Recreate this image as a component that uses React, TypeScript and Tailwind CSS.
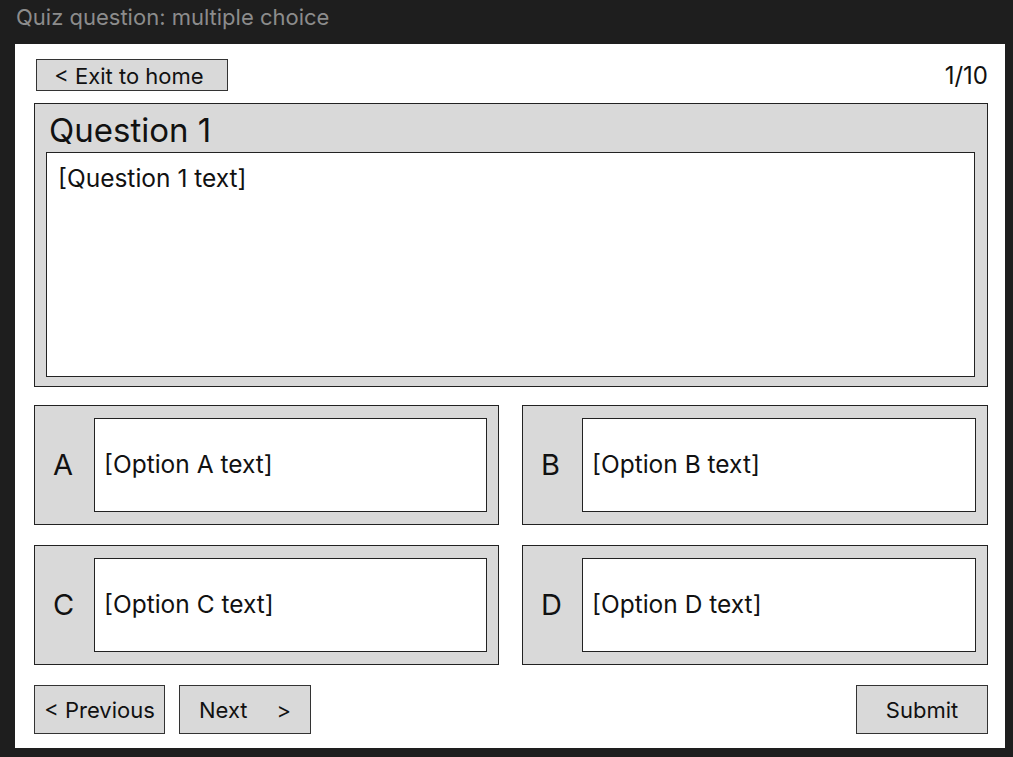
import React from "react";

const font = { fontFamily: "Inter, 'Noto Sans', sans-serif" };

function Option({ letter, text }: { letter: string; text: string }) {
  return (
    <div className="flex h-[120px] items-stretch border border-[#222] bg-[#d9d9d9] pl-[17px] pr-[11px] pt-[12px] pb-[12px]">
      <div className="flex w-[42px] shrink-0 items-center pl-[1px] pb-[1px] text-[29px] leading-none text-[#111]">{letter}</div>
      <div className="flex flex-1 items-center border border-[#222] bg-white pl-[9px] pb-[1px] text-[24.5px] text-[#111]">{text}</div>
    </div>
  );
}

function Btn({ children, className = "" }: { children: React.ReactNode; className?: string }) {
  return (
    <div className={`flex items-center border border-[#333] bg-[#d9d9d9] text-[22px] leading-none text-[#111] ${className}`}>{children}</div>
  );
}

export default function App() {
  return (
    <div className="h-[757px] w-[1013px] bg-[#1e1e1e]" style={font}>
      <div className="flex h-[44px] items-start pl-[16px] pt-[4px] text-[22px] leading-[26px] text-[#8c8c8c]">
        Quiz question: multiple choice
      </div>
      <div className="ml-[15px] flex h-[704px] w-[990px] flex-col bg-white pl-[19px] pr-[17px] pt-[15px]">
        <div className="flex h-[32px] items-center justify-between">
          <Btn className="ml-[2px] h-[32px] w-[192px] justify-center pr-[6px] pt-[1px]">&lt; Exit to home</Btn>
          <div className="pt-[2px] text-[24px] leading-none text-[#111]">1/10</div>
        </div>
        <div className="mt-[12px] flex h-[284px] flex-col border border-[#222] bg-[#d9d9d9] pl-[11px] pr-[12px] pb-[9px]">
          <div className="h-[48px] pl-[3px] pt-[7px] text-[33px] leading-[38px] text-[#111]">Question 1</div>
          <div className="flex-1 border border-[#222] bg-white pl-[11px] pt-[9px] text-[24.5px] leading-[32px] text-[#111]">
            [Question 1 text]
          </div>
        </div>
        <div className="mt-[18px] grid grid-cols-[465px_466px] gap-x-[23px] gap-y-[20px]">
          <Option letter="A" text="[Option A text]" />
          <Option letter="B" text="[Option B text]" />
          <Option letter="C" text="[Option C text]" />
          <Option letter="D" text="[Option D text]" />
        </div>
        <div className="mt-[20px] flex h-[49px] items-stretch">
          <Btn className="w-[131px] justify-center pt-[1px]">&lt; Previous</Btn>
          <Btn className="ml-[14px] w-[132px] pl-[19px] pt-[1px]">
            <span>Next</span>
            <span className="ml-[29px]">&gt;</span>
          </Btn>
          <div className="flex-1" />
          <Btn className="w-[132px] justify-center pt-[1px]">Submit</Btn>
        </div>
      </div>
    </div>
  );
}
